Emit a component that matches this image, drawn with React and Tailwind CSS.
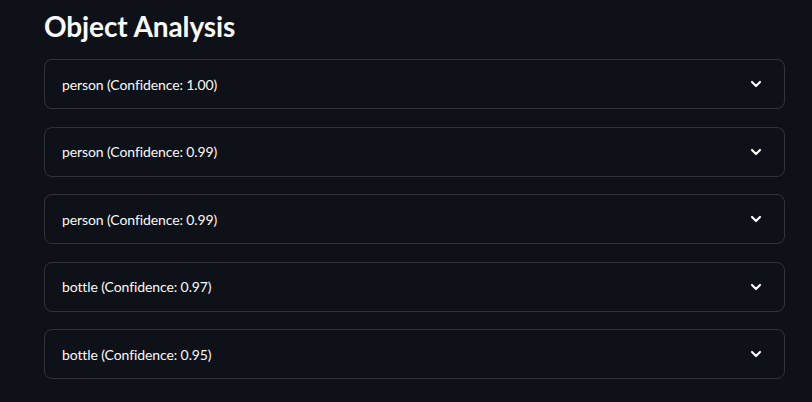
import React from "react";

const items = [
  "person (Confidence: 1.00)",
  "person (Confidence: 0.99)",
  "person (Confidence: 0.99)",
  "bottle (Confidence: 0.97)",
  "bottle (Confidence: 0.95)",
];

function Chevron() {
  return (
    <svg width="16" height="16" viewBox="0 0 24 24" fill="none" stroke="#fafafa" strokeWidth="3.2" strokeLinecap="round" strokeLinejoin="round">
      <path d="M6 9l6 6 6-6" />
    </svg>
  );
}

export default function App() {
  return (
    <div className="w-[812px] h-[402px] overflow-hidden bg-[#0e1117] text-[#fafafa]" style={{ fontFamily: "Lato, 'Noto Sans', sans-serif" }}>
      <div className="pl-[44px] pr-[27px] pt-[8px]">
        <h1 className="text-[28px] font-bold leading-[36px] tracking-[-0.1px] mb-[15px]">Object Analysis</h1>
        <div className="flex flex-col gap-[17.5px]">
          {items.map((t, i) => (
            <div key={i} className="h-[50px] border border-[#30333b] rounded-[8px] flex items-center justify-between pl-[17px] pr-[20px]">
              <span className="text-[14px] tracking-[-0.1px]">{t}</span>
              <Chevron />
            </div>
          ))}
        </div>
      </div>
    </div>
  );
}
